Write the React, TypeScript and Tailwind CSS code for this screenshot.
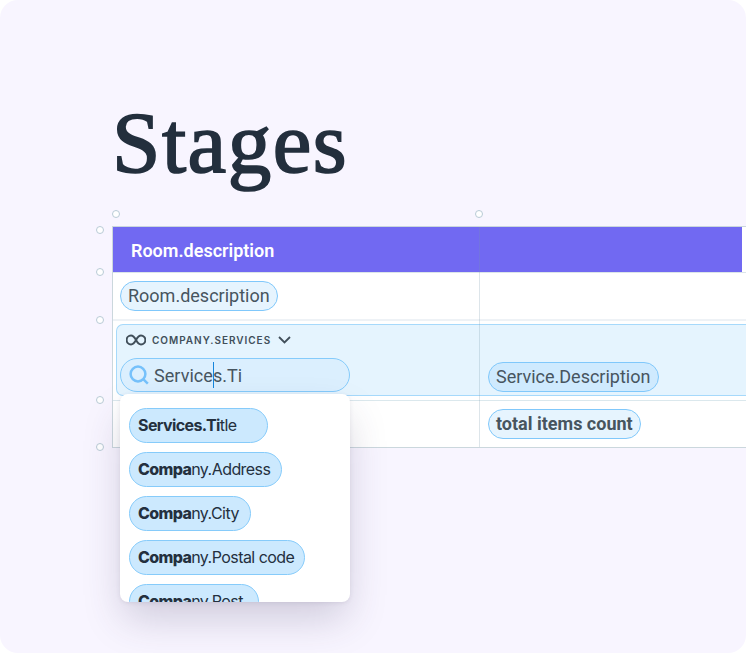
import type { ReactNode } from "react";

const roboto = "font-['Roboto','Liberation_Sans',sans-serif]";
const inter = "font-['Inter','Liberation_Sans',sans-serif]";

function Handle() {
  return <span className="block size-2 shrink-0 rounded-full border-[1.2px] border-[#b9cbd6] bg-white" />;
}

function Tag({ className, children }: { className: string; children: ReactNode }) {
  return (
    <span
      className={`${roboto} flex h-[30px] shrink-0 items-center whitespace-nowrap rounded-full border border-[#80c8fb] pl-[7px] text-[18px] leading-none text-[#47555f] ${className}`}
    >
      {children}
    </span>
  );
}

const options = [
  { bold: "Services.Ti", rest: "tle", size: "w-[139px]", weight: "font-bold tracking-[-0.6px]" },
  { bold: "Compa", rest: "ny.Address", size: "w-[153px]", weight: "font-extrabold tracking-[-0.65px]" },
  { bold: "Compa", rest: "ny.City", size: "w-[122px]", weight: "font-extrabold tracking-[-0.65px]" },
  { bold: "Compa", rest: "ny.Postal code", size: "w-[176px]", weight: "font-extrabold tracking-[-0.65px]" },
  { bold: "Compa", rest: "ny.Post", size: "w-[130px]", weight: "font-extrabold tracking-[-0.65px]" },
];

function Suggestions() {
  return (
    <div className="absolute left-[7px] top-[167px] h-[208px] w-[230px] rounded-[8px] bg-white shadow-[0_20px_40px_-4px_rgba(60,50,90,0.22),0_1px_4px_rgba(60,50,90,0.10)]">
      <ul className="flex h-full flex-col gap-[9px] overflow-hidden rounded-[8px] pl-[9px] pt-[13.5px]">
        {options.map((o) => (
          <li
            key={o.rest}
            className={`${inter} ${o.size} flex h-[35px] shrink-0 items-center whitespace-pre rounded-full border border-[#86cbfa] bg-[#cce9fe] pl-[8px] text-[16px] text-[#24303e]`}
          >
            <b className={o.weight}>{o.bold}</b>
            <span className="tracking-[-0.55px]">{o.rest}</span>
          </li>
        ))}
      </ul>
    </div>
  );
}

export default function App() {
  return (
    <div className="h-[653px] w-[746px] bg-white">
      <main className="h-full overflow-hidden rounded-[18px] bg-[#f8f5ff] pt-[91px]">
        <h1 className="ml-[112px] h-[119px] font-['Liberation_Serif',serif] text-[87px] leading-[104px] tracking-[1.5px] text-[#232f3d] [-webkit-text-stroke:1.7px_#232f3d]">
          Stages
        </h1>
        <div className="ml-[112px] flex h-[16px] gap-[355px]">
          <Handle />
          <Handle />
        </div>
        <div className="flex">
          <div className="ml-[96px] flex w-[16px] shrink-0 flex-col">
            <div className="h-[42px]"><Handle /></div>
            <div className="h-[48px]"><Handle /></div>
            <div className="h-[80px]"><Handle /></div>
            <div className="h-[47px]"><Handle /></div>
            <Handle />
          </div>
          <section className="relative h-[222px] w-[634px] shrink-0 border-b border-l border-t border-[#cbd7dd] bg-white">
            <div className={`${roboto} flex h-[45px] w-[629px] items-center bg-[#7169f2] pl-[18px] pt-px text-[18px] font-semibold text-white`}>
              Room.description
            </div>
            <div className="flex h-[49px] items-start border-b-2 border-t border-b-[#eef2f6] border-t-[#dbe5e9] pl-[7px] pt-[8px]">
              <Tag className="w-[158px] bg-[#e6f4fe]">Room.description</Tag>
            </div>
            <div className="h-[80px] border-b border-[#dbe8ed] pl-[3px] pt-[3px]">
              <div className="flex h-[72px] rounded-l-[7px] border border-r-0 border-[#a6d9fb] bg-[#e5f4fe]">
                <div className="w-[363px] pl-[3px] pt-[8px]">
                  <div className={`${inter} flex h-[14px] items-center pl-[6px] text-[10px] font-semibold text-[#414f5a]`}>
                    <svg width="20" height="12" viewBox="0 0 20 12" fill="none" stroke="currentColor" strokeWidth="2">
                      <path d="M10 6C8.5 3.3 7.2 1.6 5 1.6a4.4 4.4 0 0 0 0 8.8C7.2 10.4 8.5 8.7 10 6s2.8-4.4 5-4.4a4.4 4.4 0 0 1 0 8.8C12.8 10.4 11.5 8.7 10 6Z" />
                    </svg>
                    <span className="ml-[6px] w-[120px] whitespace-nowrap tracking-[0.98px]">COMPANY.SERVICES</span>
                    <svg className="ml-[6px]" width="13" height="8" viewBox="0 0 13 8" fill="none" stroke="currentColor" strokeWidth="1.8">
                      <path d="m1 1 5.5 5.4L12 1" />
                    </svg>
                  </div>
                  <div className={`${roboto} relative mt-[11px] flex h-[34px] w-[230px] items-center rounded-full border border-[#85cbfb] bg-[#dbeffe] pl-[8px] text-[18px] text-[#47555f]`}>
                    <svg width="20" height="20" viewBox="0 0 20 20" fill="none" stroke="#76c1fb" strokeWidth="2.5">
                      <circle cx="9" cy="9" r="7.4" />
                      <path d="m14.2 14.2 4.6 4.5" />
                    </svg>
                    <span className="ml-[5px] tracking-[0.05px]">Services.Ti</span>
                    <i className="absolute left-[92px] top-[3px] h-[26px] w-px bg-[#1585dc]" />
                  </div>
                </div>
                <div className="pl-[4px] pt-[37px]">
                  <Tag className="ml-[4px] w-[171px] bg-[#cfeafe]">Service.Description</Tag>
                </div>
              </div>
            </div>
            <div className="flex h-[46px] items-start pl-[375px] pt-[8px]">
              <Tag className="w-[153px] bg-[#e6f4fe] font-bold">total items count</Tag>
            </div>
            <div className="absolute left-[366px] top-0 h-full w-px bg-[#7898aa]/25" />
            <Suggestions />
          </section>
        </div>
      </main>
    </div>
  );
}
